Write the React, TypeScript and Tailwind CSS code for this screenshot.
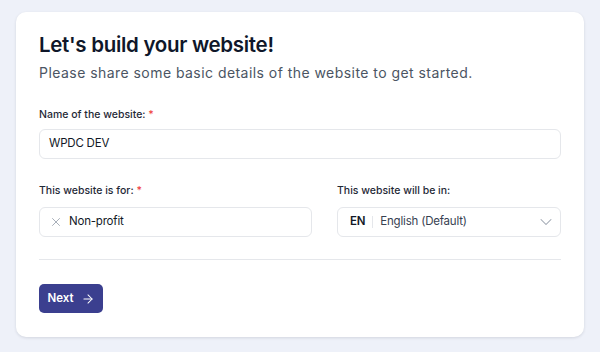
import { ArrowRight, ChevronDown, X } from "lucide-react";

export default function App() {
  return (
    <div className="min-h-[352px] w-[600px] bg-[#eef1f9] px-4 pt-3 pb-[15px] font-['Inter',sans-serif]">
      <div className="rounded-[10px] bg-white px-[23px] pt-[18px] pb-6 shadow-[0_1px_3px_rgba(15,23,42,0.12)]">
        {/* Heading */}
        <h1 className="text-[20.5px] leading-[30px] font-semibold tracking-[-0.3px] text-[#0f172a]">
          Let's build your website!
        </h1>
        <p className="mt-[4px] text-[14px] leading-[18px] tracking-[0.45px] text-[#4b5563]">
          Please share some basic details of the website to get started.
        </p>

        {/* Website name */}
        <div className="mt-[26px]">
          <label className="block text-[10.5px] leading-[14px] font-medium text-[#1f2937]">
            Name of the website: <span className="text-[#ef4444]">*</span>
          </label>
          <div className="mt-[7px] flex h-[30px] items-center rounded-md border border-[#e5e7eb] px-[9px] text-[11.5px] tracking-[-0.2px] text-[#111827]">
            WPDC DEV
          </div>
        </div>

        {/* Purpose + language */}
        <div className="mt-[25px] grid grid-cols-[273px_1fr] gap-[25px]">
          <div>
            <label className="block text-[10.5px] leading-[14px] font-medium text-[#1f2937]">
              This website is for: <span className="text-[#ef4444]">*</span>
            </label>
            <div className="mt-[9px] flex h-[30px] items-center gap-[6px] rounded-md border border-[#e5e7eb] px-[9px] text-[11.5px] tracking-[-0.2px] text-[#111827]">
              <X className="h-[14px] w-[14px] text-[#9ca3af]" strokeWidth={1.5} />
              Non-profit
            </div>
          </div>
          <div>
            <label className="block text-[10.5px] leading-[14px] font-medium text-[#1f2937]">
              This website will be in:
            </label>
            <div className="mt-[9px] flex h-[30px] items-center rounded-md border border-[#e5e7eb] pr-[4px] pl-[12px] text-[11.5px] tracking-[-0.2px] text-[#111827]">
              <span className="font-semibold">EN</span>
              <span className="mx-[7px] h-[12px] w-px bg-[#e5e7eb]" />
              <span className="text-[#374151]">English (Default)</span>
              <ChevronDown className="ml-auto h-5 w-5 text-[#9ca3af]" strokeWidth={1.25} />
            </div>
          </div>
        </div>

        <div className="mt-[22px] h-px bg-[#e5e7eb]" />

        <button className="mt-[24px] flex h-[29px] w-[64px] items-center justify-center gap-[7px] rounded-[5px] bg-[#3b3f8f] text-[11.5px] font-semibold text-white">
          Next
          <ArrowRight className="h-[14px] w-[14px]" strokeWidth={1.75} />
        </button>
      </div>
    </div>
  );
}
